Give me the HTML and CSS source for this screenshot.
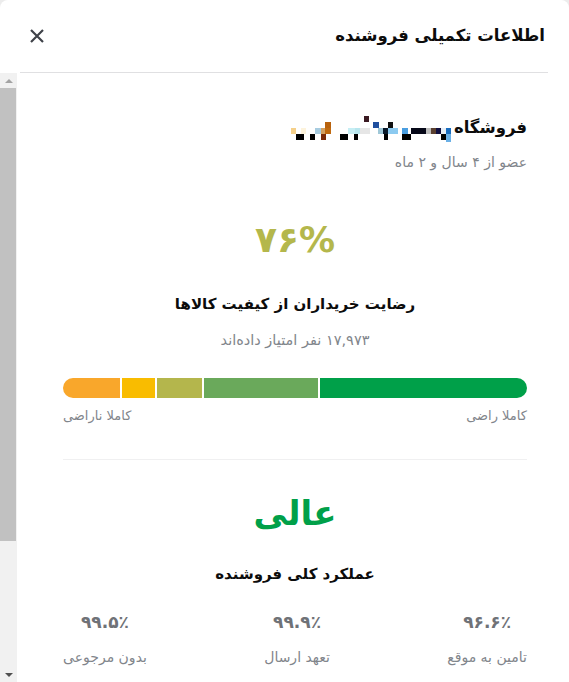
FILE: index.html
```html
<!DOCTYPE html>
<html lang="fa">
<head>
<meta charset="utf-8">
<title>اطلاعات تکمیلی فروشنده</title>
<link rel="stylesheet" href="styles.css">
</head>
<body>
<div class="modal">
  <header class="modal-head">
    <h1 class="modal-title">اطلاعات تکمیلی فروشنده</h1>
    <button class="close-btn" aria-label="بستن">
      <svg width="16" height="16" viewBox="0 0 16 16"><path d="M2 2 L14 14 M14 2 L2 14" stroke="#3f4249" stroke-width="2.2" stroke-linecap="butt" fill="none"/></svg>
    </button>
  </header>
  <div class="head-divider"></div>
  <div class="modal-body">
    <div class="scrollbar">
      <div class="sb-btn sb-up"><span class="tri-up"></span></div>
      <div class="sb-thumb"></div>
      <div class="sb-track"></div>
      <div class="sb-btn sb-down"><span class="tri-down"></span></div>
    </div>
    <div class="content">
      <div class="store-row">
        <span class="store-label">فروشگاه</span>
        <svg class="store-name" width="164" height="30" viewBox="0 0 164 30">
          <rect x="76" y="3" width="5" height="6" fill="#3b1a22"/>
          <rect x="37" y="9" width="6" height="6" fill="#b8620e"/>
          <rect x="85" y="9" width="6" height="6" fill="#1f4f9e"/>
          <rect x="100" y="9" width="5" height="6" fill="#111"/>
          <rect x="3" y="15" width="5" height="6" fill="#f5d08a"/>
          <rect x="13" y="15" width="5" height="6" fill="#fdf3dc"/>
          <rect x="27" y="15" width="6" height="6" fill="#a8cce0"/>
          <rect x="33" y="15" width="4" height="6" fill="#d4a060"/>
          <rect x="37" y="15" width="6" height="6" fill="#c06a10"/>
          <rect x="60" y="15" width="7" height="6" fill="#c6eef4"/>
          <rect x="67" y="15" width="5" height="6" fill="#b8e6ee"/>
          <rect x="72" y="15" width="10" height="6" fill="#e6e6e6"/>
          <rect x="90" y="15" width="5" height="6" fill="#a0c8d8"/>
          <rect x="95" y="15" width="5" height="6" fill="#0a1a2a"/>
          <rect x="100" y="15" width="10" height="6" fill="#8ccaf0"/>
          <rect x="114" y="15" width="6" height="6" fill="#4a9ee0"/>
          <rect x="123" y="15" width="15" height="6" fill="#060818"/>
          <rect x="138" y="15" width="5" height="6" fill="#bcbcbc"/>
          <rect x="143" y="15" width="5" height="6" fill="#5a4030"/>
          <rect x="148" y="15" width="5" height="6" fill="#101040"/>
          <rect x="153" y="15" width="5" height="6" fill="#e6eef6"/>
          <rect x="158" y="15" width="5" height="6" fill="#1a6ec0"/>
          <rect x="8" y="21" width="8" height="6" fill="#000"/>
          <rect x="22" y="21" width="5" height="6" fill="#000"/>
          <rect x="33" y="21" width="5" height="6" fill="#7a2a08"/>
          <rect x="52" y="21" width="8" height="6" fill="#000"/>
          <rect x="66" y="21" width="4" height="6" fill="#000"/>
          <rect x="96" y="21" width="4" height="6" fill="#000"/>
          <rect x="114" y="21" width="9" height="6" fill="#000"/>
          <rect x="153" y="21" width="5" height="6" fill="#000"/>
          <rect x="158" y="21" width="5" height="8" fill="#6ab0e6"/>
        </svg>
      </div>
      <p class="member-since">عضو از ۴ سال و ۲ ماه</p>

      <div class="big-percent">۷۶%</div>
      <h2 class="section-title sat-title">رضایت خریداران از کیفیت کالاها</h2>
      <p class="count">۱۷,۹۷۳ نفر امتیاز داده‌اند</p>

      <div class="rating-bar">
        <span class="seg seg-5"></span>
        <span class="seg seg-4"></span>
        <span class="seg seg-3"></span>
        <span class="seg seg-2"></span>
        <span class="seg seg-1"></span>
      </div>
      <div class="bar-labels">
        <span>کاملا راضی</span>
        <span>کاملا ناراضی</span>
      </div>

      <div class="divider"></div>

      <div class="grade">عالی</div>
      <h2 class="section-title perf-title">عملکرد کلی فروشنده</h2>

      <div class="stats">
        <div class="stat">
          <span class="stat-value">۹۶.۶٪</span>
          <span class="stat-label">تامین به موقع</span>
        </div>
        <div class="stat">
          <span class="stat-value">۹۹.۹٪</span>
          <span class="stat-label">تعهد ارسال</span>
        </div>
        <div class="stat">
          <span class="stat-value">۹۹.۵٪</span>
          <span class="stat-label">بدون مرجوعی</span>
        </div>
      </div>
    </div>
  </div>
</div>
</body>
</html>
```

FILE: styles.css
```css
* { box-sizing: border-box; }
html, body { margin: 0; padding: 0; }
body {
  background: #ececec;
  font-family: "DejaVu Sans", "Noto Sans", sans-serif;
  width: 569px;
  height: 682px;
  overflow: hidden;
}
.modal {
  background: #fff;
  height: 682px;
  border-radius: 8px 8px 0 0;
  display: flex;
  flex-direction: column;
  overflow: hidden;
}
.modal-head {
  direction: rtl;
  height: 72px;
  flex: 0 0 72px;
  display: flex;
  align-items: center;
  justify-content: space-between;
  padding: 0 24px 0 29px;
}
.modal-title {
  margin: 0;
  font-size: 16.5px;
  font-weight: bold;
  color: #0c0c0c;
  line-height: 24px;
}
.close-btn {
  border: 0;
  background: none;
  padding: 0;
  width: 16px;
  height: 16px;
  display: flex;
}
.head-divider {
  height: 1px;
  background: #e0e0e2;
  margin: 0 21px 0 20px;
  flex: 0 0 1px;
}
.modal-body {
  flex: 1;
  display: flex;
  direction: ltr;
  min-height: 0;
}
.scrollbar {
  width: 17px;
  flex: 0 0 17px;
  background: #f1f1f1;
  display: flex;
  flex-direction: column;
}
.sb-btn {
  height: 15px;
  flex: 0 0 15px;
  display: flex;
  align-items: center;
  justify-content: center;
}
.tri-up {
  width: 0; height: 0;
  border-left: 4px solid transparent;
  border-right: 4px solid transparent;
  border-bottom: 4px solid #a3a3a3;
}
.tri-down {
  width: 0; height: 0;
  border-left: 4px solid transparent;
  border-right: 4px solid transparent;
  border-top: 4px solid #505050;
}
.sb-thumb {
  height: 453px;
  flex: 0 0 453px;
  background: #c1c1c1;
  margin-right: 1px;
}
.sb-track { flex: 1; }
.content {
  flex: 1;
  direction: rtl;
  padding: 0 42px 0 46px;
  text-align: center;
}
.store-row {
  margin-top: 40px;
  height: 30px;
  display: flex;
  align-items: center;
  gap: 2px;
}
.store-label {
  font-size: 16.5px;
  font-weight: bold;
  color: #0c0c0c;
  line-height: 30px;
}
.store-name { display: block; }
.member-since {
  margin: 9px 0 0;
  line-height: 20px;
  font-size: 14px;
  color: #81858b;
  text-align: right;
}
.big-percent {
  margin-top: 43px;
  line-height: 50px;
  font-size: 36px;
  font-weight: bold;
  color: #b4b74c;
}
.section-title {
  margin: 0;
  font-size: 15px;
  font-weight: bold;
  color: #0c0c0c;
  line-height: 24px;
}
.sat-title { margin-top: 27px; }
.count {
  margin: 14px 0 0;
  line-height: 20px;
  font-size: 14.5px;
  color: #81858b;
}
.rating-bar {
  margin-top: 28px;
  height: 20px;
  display: flex;
  border-radius: 10px;
  overflow: hidden;
  gap: 2px;
  background: #fff;
}
.seg { display: block; height: 100%; }
.seg-5 { flex: 0 0 207px; background: #00a049; }
.seg-4 { flex: 0 0 114px; background: #6aa95b; }
.seg-3 { flex: 0 0 45px; background: #b4b64c; }
.seg-2 { flex: 0 0 33px; background: #f9bc00; }
.seg-1 { flex: 1; background: #f9a72b; }
.bar-labels {
  margin-top: 8px;
  line-height: 20px;
  display: flex;
  justify-content: space-between;
  font-size: 13px;
  color: #81858b;
}
.divider {
  margin-top: 33px;
  height: 1px;
  background: #f0f0f1;
}
.grade {
  margin-top: 28px;
  line-height: 50px;
  font-size: 34px;
  font-weight: bold;
  color: #00a049;
}
.perf-title { margin-top: 24px; }
.stats {
  margin: 24px 0 0;
  display: flex;
  justify-content: space-between;
}
.stat {
  display: flex;
  flex-direction: column;
  align-items: center;
}
.stat-value {
  line-height: 24px;
  font-size: 17px;
  font-weight: bold;
  color: #6f7277;
}
.stat-label {
  margin-top: 13px;
  line-height: 20px;
  font-size: 14px;
  color: #81858b;
}
```
